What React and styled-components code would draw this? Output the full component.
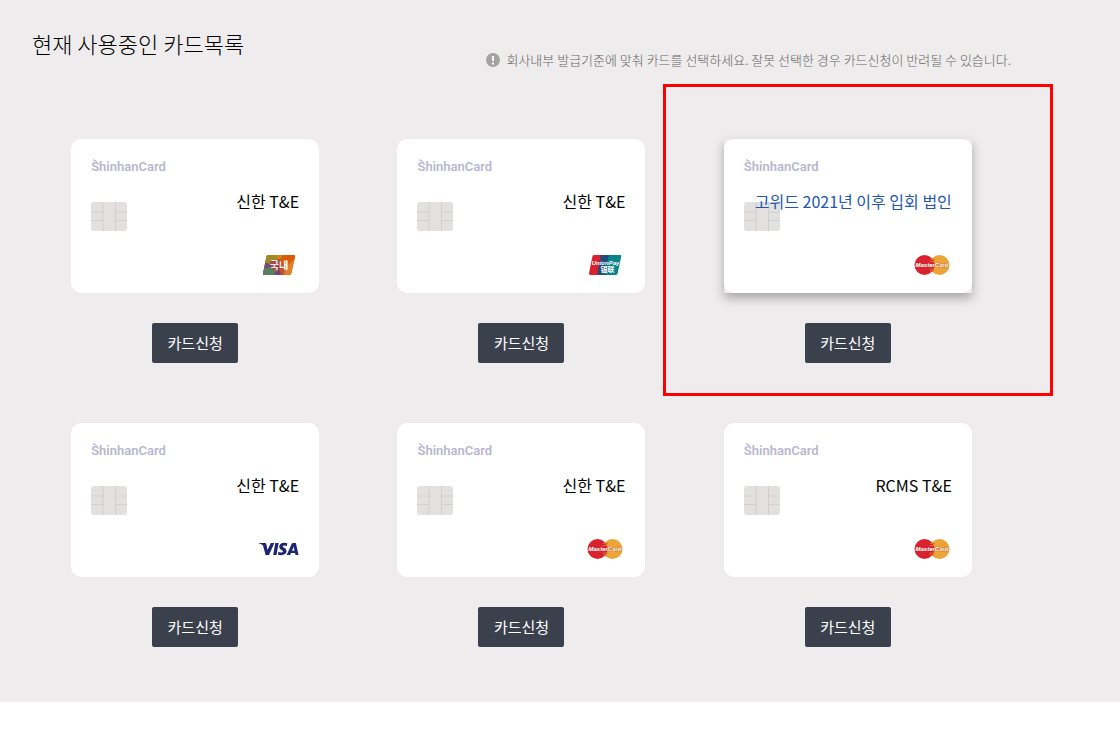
import styled, { createGlobalStyle } from 'styled-components';

const CARD_LIST = [
  { id: 1, name: '신한 T&E', brand: 'domestic' },
  { id: 2, name: '신한 T&E', brand: 'unionpay' },
  { id: 3, name: '고위드 2021년 이후 입회 법인', brand: 'master', active: true },
  { id: 4, name: '신한 T&E', brand: 'visa' },
  { id: 5, name: '신한 T&E', brand: 'master' },
  { id: 6, name: 'RCMS T&E', brand: 'master' },
];

const DomesticLogo = () => (
  <BrandLogo viewBox="-1 0 40 20" role="img" aria-label="국내">
    <clipPath id="domesticShape">
      <path d="M8 0H34a1.3 1.3 0 0 1 1.2 1.6L31.4 18.6A2 2 0 0 1 29.5 20H4.2A1.2 1.2 0 0 1 3 18.6L6.4 1.4A1.7 1.7 0 0 1 8 0Z" />
    </clipPath>
    <g clipPath="url(#domesticShape)">
      <path fill="#d95b06" d="M0 0h40v20H0z" />
      <path fill="#9c8a24" d="M0 0h21l-7 9-10-1z" />
      <path fill="#c58a14" d="M15 0h8l-4 7z" />
      <path fill="#764a78" d="M4 7l9 3-3 5-8 2z" />
      <path fill="#56805a" d="M2 14l10-2 6 8H2z" />
      <path fill="#a04a4c" d="M10 6l10-2 3 9-10 2z" />
      <path fill="#7a4178" d="M14 20l4-7 6 2v5z" />
      <path fill="#c5522f" d="M19 11l7-1-1 10h-4z" />
      <path fill="#df8129" d="M25 12l9-7-3 15h-7z" />
      <path fill="#fff" fillOpacity="0.4" d="M24 6h4v8h-4z" />
    </g>
    <text x="19" y="14" fontSize="10" fontWeight="500" fill="#fff" textAnchor="middle">국내</text>
  </BrandLogo>
);

const UnionPayLogo = () => (
  <BrandLogo viewBox="-1 0 40 20" role="img" aria-label="UnionPay">
    <path fill="#d8232f" d="M8 0h10l-4 20H4.4A1.4 1.4 0 0 1 3 18.3L6.4 1.4A1.7 1.7 0 0 1 8 0Z" />
    <path fill="#24497c" d="M16 0h10l-4 20H12.6a1.2 1.2 0 0 1-1.1-1.5l3-17A1.7 1.7 0 0 1 16 0Z" />
    <path fill="#088389" d="M24 0h10a1.2 1.2 0 0 1 1.2 1.5l-3.6 17a1.9 1.9 0 0 1-1.8 1.5H20.2a1.2 1.2 0 0 1-1.1-1.5l3.4-17A1.7 1.7 0 0 1 24 0Z" />
    <text x="19.5" y="10" fontSize="6" fontWeight="700" fontStyle="italic" fill="#fff" textAnchor="middle">UnionPay</text>
    <text x="21.5" y="17" fontSize="7" fontWeight="700" fill="#fff" textAnchor="middle">银联</text>
  </BrandLogo>
);

const MasterLogo = () => (
  <BrandLogo viewBox="0 0 40 20" role="img" aria-label="MasterCard">
    <circle cx="27.5" cy="10" r="10" fill="#eda436" />
    <circle cx="12.5" cy="10" r="10" fill="#d9222e" />
    <path d="M18 4.5h5M17.5 6.5h5M17.5 14h5M18 16h4" stroke="#e0672f" strokeWidth="1" />
    <text x="20" y="12" fontSize="6" fontWeight="700" fontStyle="italic" textAnchor="middle" fill="#fff" stroke="#a83a30" strokeWidth="0.5" paintOrder="stroke">
      MasterCard
    </text>
  </BrandLogo>
);

const VisaLogo = () => (
  <BrandLogo viewBox="0 0 40 20" role="img" aria-label="VISA">
    <g fill="#1c2474">
      <path d="M0 4h5.6c1 0 1.6.5 1.8 1.4l1.1 5.5L11.8 4h3.5L10 16H6.6L4 6.6C3 5.4 1.6 4.8 0 4.5Z" />
      <path d="M16.3 4h3.3l-2.1 12h-3.3Z" />
      <path d="M28.3 4.3l-.5 2.7c-1.2-.6-4-.9-4 .5 0 1.2 3.7 1.5 3.7 4.6 0 3.6-4.8 4.9-8.6 3.5l.5-2.8c1.6.8 4.5 1 4.6-.4.1-1.4-3.7-1.5-3.7-4.7 0-3.7 4.7-4.6 8-3.4Z" />
      <path fillRule="evenodd" d="M34.2 4h2.7L39.5 16h-3l-.4-1.9h-4.2L31.2 16h-3.5l4.9-11c.3-.7.8-1 1.6-1Zm.5 3.5-1.7 4.2h2.5Z" />
    </g>
  </BrandLogo>
);

const BRANDS = {
  domestic: DomesticLogo,
  unionpay: UnionPayLogo,
  master: MasterLogo,
  visa: VisaLogo,
};

const CardChip = () => (
  <Chip viewBox="0 0 36 29" aria-hidden="true">
    <rect width="36" height="29" rx="3" fill="#e2e1e0" />
    <path d="M0 10h12M0 18.5h12M24.5 10H36M24.5 18.5H36M12 0v29M24.5 0v29" stroke="#d0d0d0" fill="none" />
  </Chip>
);

const CardItem = ({ card }) => {
  const Brand = BRANDS[card.brand];

  return (
    <Item>
      <CardShadow $active={card.active}>
        <CardFace>
          <Issuer>
            <IssuerMark viewBox="0 0 6 4" aria-hidden="true">
              <path d="M1 0l4 2v1L1 1.5z" fill="currentColor" />
            </IssuerMark>
            ShinhanCard
          </Issuer>
          <CardBody>
            <CardChip />
            <CardName $active={card.active}>{card.name}</CardName>
          </CardBody>
          <Brand />
        </CardFace>
      </CardShadow>
      <ApplyButton type="button">카드신청</ApplyButton>
      {card.active && <Highlight />}
    </Item>
  );
};

const App = () => {
  return (
    <>
      <GlobalStyle />
      <Container>
        <Header>
          <Title>현재 사용중인 카드목록</Title>
          <Notice>
            <NoticeIcon viewBox="0 0 14 14" aria-hidden="true">
              <circle cx="7" cy="7" r="7" fill="#a3a3a3" />
              <path d="M6 3h2v5H6zM6 9.5h2v2H6z" fill="#fff" />
            </NoticeIcon>
            회사내부 발급기준에 맞춰 카드를 선택하세요. 잘못 선택한 경우 카드신청이 반려될 수 있습니다.
          </Notice>
        </Header>
        <CardGrid>
          {CARD_LIST.map((card) => (
            <CardItem key={card.id} card={card} />
          ))}
        </CardGrid>
      </Container>
    </>
  );
};

const GlobalStyle = createGlobalStyle`
  * {
    box-sizing: border-box;
  }
  body {
    margin: 0;
    background-color: #fff;
    color: #000;
    font-family: 'Noto Sans CJK KR', sans-serif;
  }
`;

const Container = styled.main`
  padding: 28px 109px 55px 32px;
  background-color: #eeecec;
`;

const Header = styled.header`
  display: flex;
  justify-content: space-between;
  height: 42px;
  margin-bottom: 69px;
`;

const Title = styled.h1`
  margin: 0;
  font-size: 22px;
  font-weight: 300;
  line-height: 30px;
`;

const Notice = styled.p`
  display: flex;
  align-items: center;
  align-self: flex-end;
  gap: 6px;
  margin: 0;
  color: #666;
  font-size: 13px;
  font-weight: 300;
  line-height: 20px;
  white-space: nowrap;
`;

const NoticeIcon = styled.svg`
  width: 14px;
  height: 14px;
`;

const CardGrid = styled.ul`
  display: grid;
  grid-template-columns: repeat(3, 1fr);
  row-gap: 60px;
  margin: 0;
  padding: 0;
  list-style: none;
`;

const Item = styled.li`
  position: relative;
  display: flex;
  flex-direction: column;
  align-items: center;
  gap: 30px;
`;

const CardShadow = styled.div`
  background-color: #eeecec;
  box-shadow: ${({ $active }) => ($active ? '0 5px 10px rgba(0, 0, 0, 0.3)' : 'none')};
`;

const CardFace = styled.div`
  display: flex;
  flex-direction: column;
  width: 248px;
  padding: 20px 20px 18px;
  border-radius: 10px;
  background-color: #fff;
`;

const Issuer = styled.div`
  position: relative;
  color: #b9b7ce;
  font-family: Roboto, sans-serif;
  font-size: 13px;
  font-weight: 600;
  line-height: 15px;
`;

const IssuerMark = styled.svg`
  position: absolute;
  top: 0;
  left: 1px;
  width: 6px;
  height: 4px;
`;

const CardBody = styled.div`
  display: grid;
  height: 41px;
  margin: 16px 0 24px;
`;

const Chip = styled.svg`
  grid-area: 1 / 1;
  align-self: end;
  width: 36px;
  height: 29px;
`;

const CardName = styled.strong`
  z-index: 1;
  grid-area: 1 / 1;
  justify-self: end;
  color: ${({ $active }) => ($active ? '#2457ad' : '#000')};
  font-size: 16px;
  font-weight: 400;
  line-height: 22px;
  white-space: nowrap;
`;

const BrandLogo = styled.svg`
  align-self: flex-end;
  width: 40px;
  height: 20px;
  font-family: 'Liberation Sans', 'Noto Sans CJK KR', sans-serif;
`;

const ApplyButton = styled.button`
  min-width: 86px;
  height: 40px;
  padding: 0 15px 2px;
  border: none;
  border-radius: 2px;
  background-color: #3b404d;
  color: #fff;
  font-family: inherit;
  font-size: 15px;
  cursor: pointer;
  &:hover {
    background-color: #2c303a;
  }
`;

const Highlight = styled.div`
  position: absolute;
  top: -55px;
  right: -42px;
  bottom: -33px;
  left: -22px;
  border: 3px solid #f00;
  pointer-events: none;
`;

export default App;
